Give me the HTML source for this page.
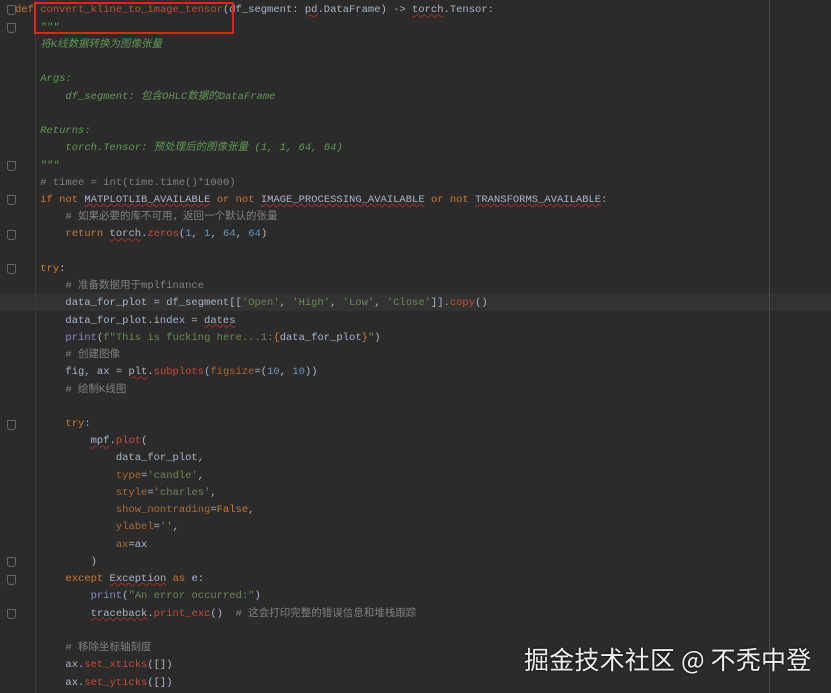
<!DOCTYPE html>
<html><head><meta charset="utf-8"><style>
html,body{margin:0;padding:0;width:831px;height:693px;overflow:hidden;background:#2b2b2b;}
.code{position:absolute;left:0;top:2.4px;margin:0;padding-left:15px;font-family:"Liberation Mono","Noto Sans CJK SC",monospace;font-size:10.5px;line-height:17.23px;color:#a9b7c6;white-space:pre;}
.k{color:#cc7832}.s{color:#6a8759}.n{color:#6897bb}.c{color:#808080}.d{color:#629755;font-style:italic}
.f{color:#c74a3a}.p{color:#8888c6}.a{color:#aa6a32}.u{text-decoration:underline wavy #a03030;text-decoration-thickness:1px}
.hl{position:absolute;left:0;top:293px;width:831px;height:18px;background:#323232;}
.vl{position:absolute;top:0;height:693px;width:1px;}
.box{position:absolute;left:34px;top:2px;width:196px;height:28px;border:2px solid #e0251f;}
.wm{position:absolute;left:524px;top:641px;font-family:"Noto Sans CJK SC","WenQuanYi Zen Hei",sans-serif;font-size:25px;color:#f0f0f0;text-shadow:0 0 2px #000;letter-spacing:0.2px;white-space:nowrap;}
.g{position:absolute;width:7px;height:8px;border:1px solid #666;border-radius:1px 1px 3px 3px;left:7px;}
</style></head><body>
<div class="hl"></div>
<div class="vl" style="left:35px;background:#3a3a3a"></div>
<div class="vl" style="left:769px;background:#4a4a4a"></div>
<div class="g" style="top:5px"></div><div class="g" style="top:23px"></div><div class="g" style="top:161px"></div><div class="g" style="top:195px"></div><div class="g" style="top:230px"></div><div class="g" style="top:264px"></div><div class="g" style="top:420px"></div><div class="g" style="top:557px"></div><div class="g" style="top:575px"></div><div class="g" style="top:609px"></div>
<pre class="code"><span class="k">def</span> <span class="f">convert_kline_to_image_tensor</span>(df_segment: <span class="u">pd</span>.DataFrame) -&gt; <span class="u">torch</span>.Tensor:
    <span class="d">"""</span>
    <span class="d">将K线数据转换为图像张量</span>

    <span class="d">Args:</span>
        <span class="d">df_segment: 包含OHLC数据的DataFrame</span>

    <span class="d">Returns:</span>
        <span class="d">torch.Tensor: 预处理后的图像张量 (1, 1, 64, 64)</span>
    <span class="d">"""</span>
    <span class="c"># timee = int(time.time()*1000)</span>
    <span class="k">if not</span> <span class="u">MATPLOTLIB_AVAILABLE</span> <span class="k">or not</span> <span class="u">IMAGE_PROCESSING_AVAILABLE</span> <span class="k">or not</span> <span class="u">TRANSFORMS_AVAILABLE</span>:
        <span class="c"># 如果必要的库不可用，返回一个默认的张量</span>
        <span class="k">return</span> <span class="u">torch</span>.<span class="f">zeros</span>(<span class="n">1</span>, <span class="n">1</span>, <span class="n">64</span>, <span class="n">64</span>)

    <span class="k">try</span>:
        <span class="c"># 准备数据用于mplfinance</span>
        data_for_plot = df_segment[[<span class="s">'Open'</span>, <span class="s">'High'</span>, <span class="s">'Low'</span>, <span class="s">'Close'</span>]].<span class="f">copy</span>()
        data_for_plot.index = <span class="u">dates</span>
        <span class="p">print</span>(<span class="s">f"This is fucking here...1:</span><span class="k">{</span>data_for_plot<span class="k">}</span><span class="s">"</span>)
        <span class="c"># 创建图像</span>
        fig, ax = <span class="u">plt</span>.<span class="f">subplots</span>(<span class="a">figsize</span>=(<span class="n">10</span>, <span class="n">10</span>))
        <span class="c"># 绘制K线图</span>

        <span class="k">try</span>:
            <span class="u">mpf</span>.<span class="f">plot</span>(
                data_for_plot,
                <span class="a">type</span>=<span class="s">'candle'</span>,
                <span class="a">style</span>=<span class="s">'charles'</span>,
                <span class="a">show_nontrading</span>=<span class="k">False</span>,
                <span class="a">ylabel</span>=<span class="s">''</span>,
                <span class="a">ax</span>=ax
            )
        <span class="k">except</span> <span class="u">Exception</span> <span class="k">as</span> e:
            <span class="p">print</span>(<span class="s">"An error occurred:"</span>)
            <span class="u">traceback</span>.<span class="f">print_exc</span>()  <span class="c"># 这会打印完整的错误信息和堆栈跟踪</span>

        <span class="c"># 移除坐标轴刻度</span>
        ax.<span class="f">set_xticks</span>([])
        ax.<span class="f">set_yticks</span>([])</pre>
<div class="box"></div>
<div class="wm">掘金技术社区 @ 不秃中登</div>
</body></html>
